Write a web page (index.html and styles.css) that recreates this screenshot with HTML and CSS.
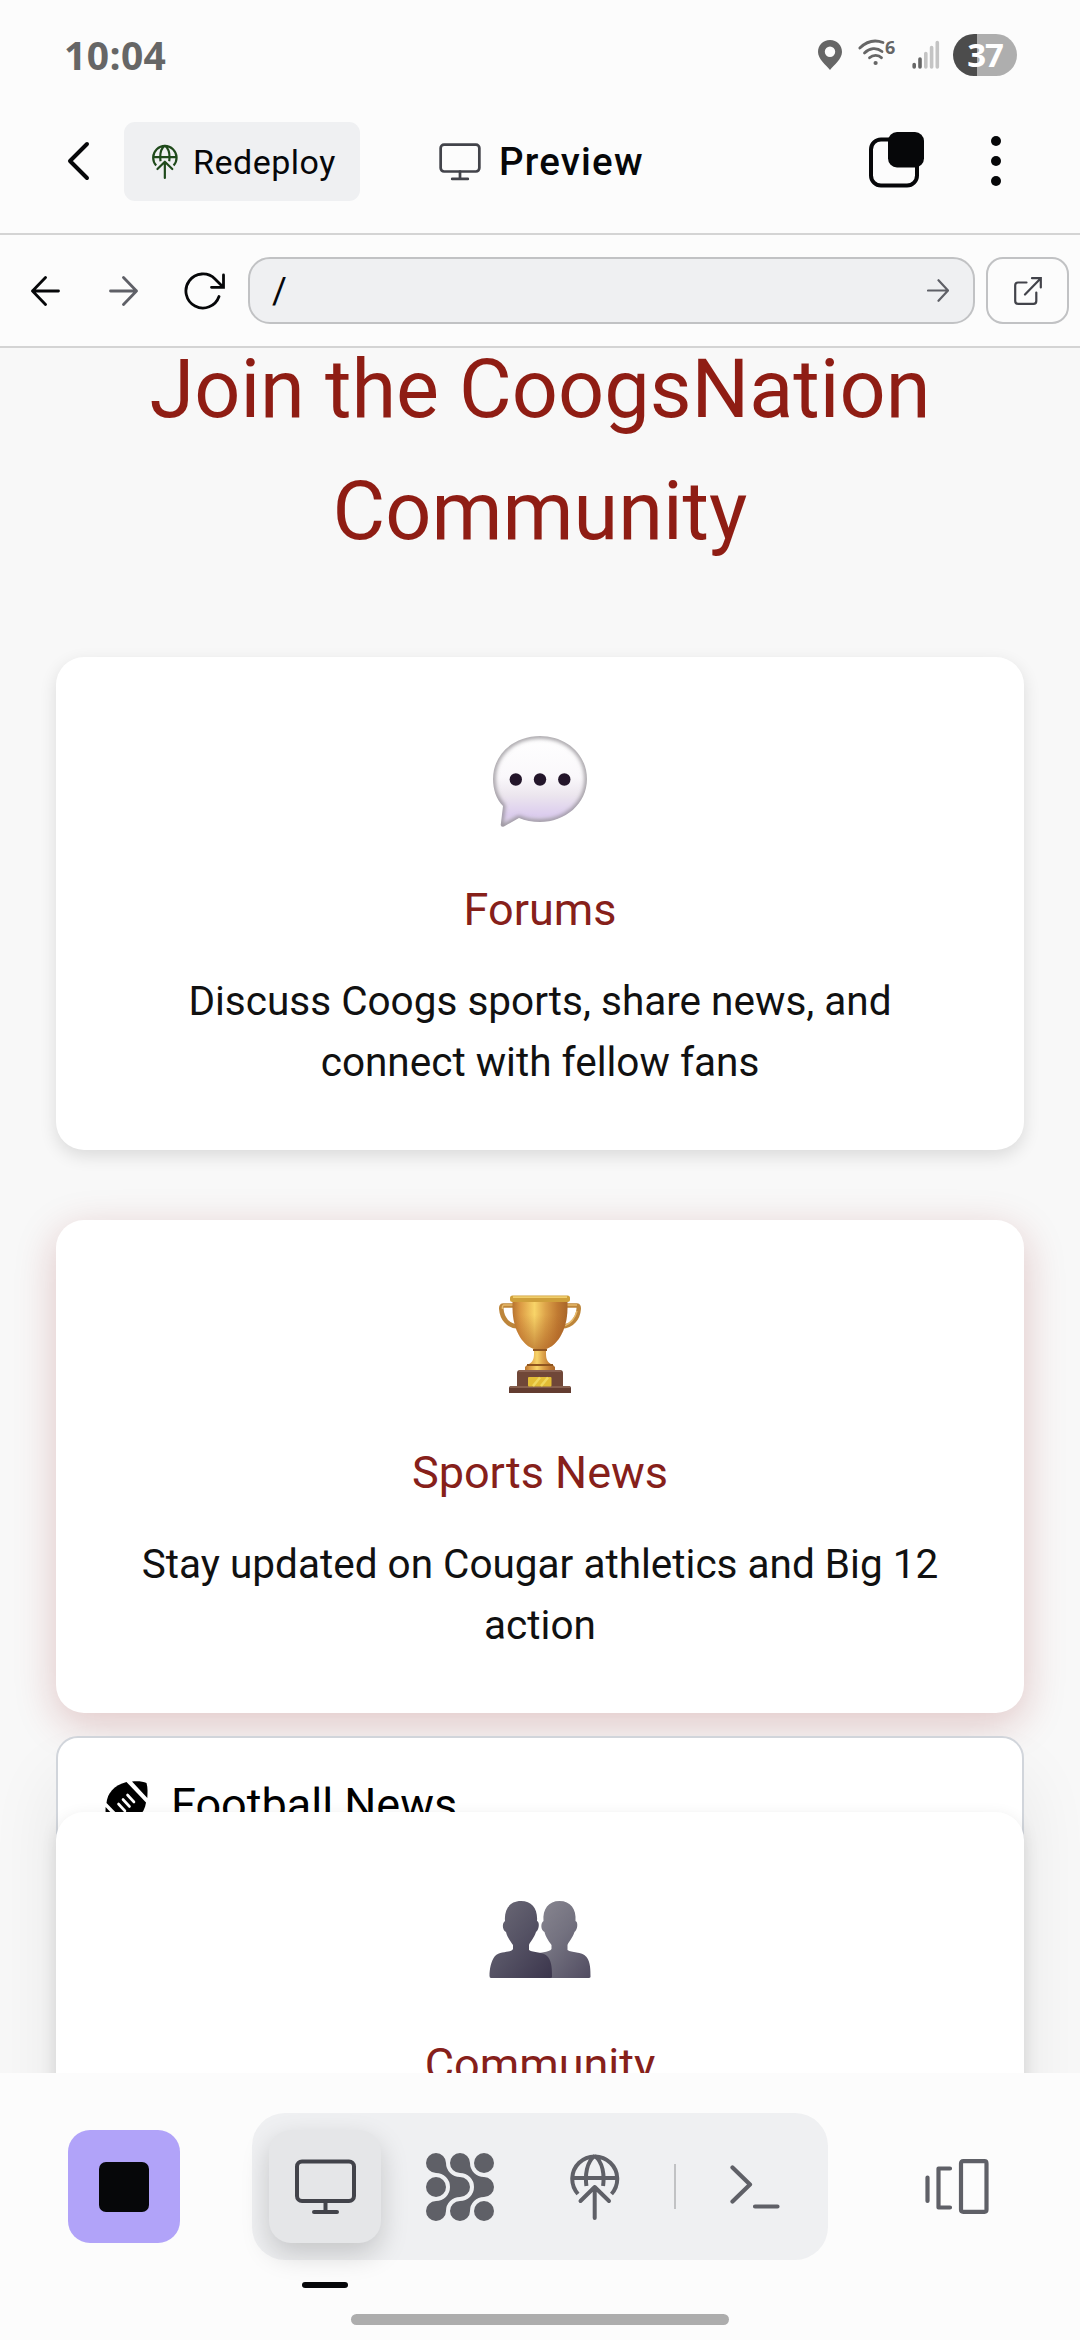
FILE: index.html
```html
<!DOCTYPE html>
<html lang="en">
<head>
<meta charset="utf-8">
<title>Preview</title>
<link rel="stylesheet" href="styles.css">
</head>
<body>
<svg class="defs" width="0" height="0">
  <symbol id="globe" viewBox="0 0 50 67" fill="none" stroke="currentColor" stroke-linecap="round" stroke-linejoin="round">
    <path stroke-linecap="butt" d="M8 41A22.5 22.5 0 1 1 41.5 41M24.7 3C16.5 9 15 22 16.400 33M24.700 3C33 9 34.500 22 33.100 33M2.500 25H47"/>
    <path d="M24.700 65V34M10.500 48L24.700 34L39 48"/>
  </symbol>
  <symbol id="monitor" viewBox="0 0 61 56" fill="none" stroke="currentColor" stroke-linecap="round" stroke-linejoin="round">
    <rect x="2" y="2.500" width="57" height="39.500" rx="5"/><path d="M30.500 42V53M19 53H42"/>
  </symbol>
</svg>
<div class="screen">
  <div class="status">
    <span class="clock">10:04</span>
    <svg class="pin" width="24" height="30" viewBox="0 0 24 30"><path fill="#666" fill-rule="evenodd" d="M12 0C5 0 0 5 0 12C0 19 8 25 12 30C16 25 24 19 24 12C24 5 19 0 12 0ZM12 6.500A5.200 5.200 0 1 1 12 16.900A5.200 5.200 0 1 1 12 6.500Z"/></svg>
    <svg class="wifi" width="38" height="28" viewBox="0 0 38 28"><g fill="none" stroke="#666" stroke-width="2.800" stroke-linecap="round"><path d="M1.800 9C8.500 2.500 17 .5 25 3.500M6.500 14C11.500 9 18.500 8 24 12.500M11.500 18.800C15 15.600 20.500 15.600 23.500 18.800"/></g><circle cx="17.600" cy="24" r="2.100" fill="#666"/><text x="27" y="14.800" class="wifi-gen">6</text></svg>
    <svg class="signal" width="28" height="30" viewBox="0 0 28 30" stroke-width="3.600" stroke-linecap="round"><path stroke="#666" d="M2.200 24.500V27M8 19V27"/><path stroke="#c4c4c4" d="M13.800 13.500V27M19.600 7.500V27M25.300 2.500V27"/></svg>
    <span class="battery">37</span>
  </div>
  <div class="header">
    <svg class="back" width="24" height="40" viewBox="0 0 24 40"><path d="M20 3L3 20L20 37" fill="none" stroke="#060709" stroke-width="4" stroke-linecap="round" stroke-linejoin="round"/></svg>
    <div class="redeploy"><svg width="26" height="35"><use href="#globe" stroke-width="4.200"/></svg><span>Redeploy</span></div>
    <div class="title"><svg width="42" height="38"><use href="#monitor" stroke-width="4"/></svg><span>Preview</span></div>
    <svg class="tabs" width="56" height="56" viewBox="0 0 56 56"><rect x="2" y="7.500" width="46" height="46" rx="10" fill="none" stroke="#060709" stroke-width="4"/><rect x="19" y="0" width="36" height="35.500" rx="9" fill="#060709"/></svg>
    <svg class="more" width="10" height="50" viewBox="0 0 10 50" fill="#060709"><circle cx="5" cy="5" r="5"/><circle cx="5" cy="25" r="5"/><circle cx="5" cy="45" r="5"/></svg>
  </div>
  <div class="toolbar">
    <svg class="nav-back" width="29" height="30" viewBox="0 0 29 30"><path d="M27.500 15H1.500M14.500 1.500L1.500 15L14.500 28.500" fill="none" stroke="#060709" stroke-width="2.800" stroke-linecap="round" stroke-linejoin="round"/></svg>
    <svg class="nav-forward" width="29" height="30" viewBox="0 0 29 30"><path d="M1.500 15H27.500M14.500 1.500L27.500 15L14.500 28.500" fill="none" stroke="#5f6067" stroke-width="2.800" stroke-linecap="round" stroke-linejoin="round"/></svg>
    <svg class="reload" width="42" height="38" viewBox="0 0 42 38"><path d="M35 24.500A17 17 0 1 1 31 7L39 15M39.500 3V15.300H27.500" fill="none" stroke="#060709" stroke-width="2.800" stroke-linecap="round"/></svg>
    <div class="address"><span>/</span><svg width="22" height="23" viewBox="0 0 22 23"><path d="M1 11.500H21M11.500 1.200L21 11.500L11.500 21.800" fill="none" stroke="#5f6067" stroke-width="2.200" stroke-linecap="round" stroke-linejoin="round"/></svg></div>
    <div class="open"><svg width="28" height="28" viewBox="0 0 28 28"><path d="M12.500 5.500H4A2.800 2.800 0 0 0 1.200 8.300V24A2.800 2.800 0 0 0 4 26.800H19.500A2.800 2.800 0 0 0 22.300 24V15.500M18 1.200H26.800V10.500M26.800 1.200L11 17.500" fill="none" stroke="#42434a" stroke-width="2.200" stroke-linecap="round"/></svg></div>
  </div>
  <div class="page">
    <h1>Join the CoogsNation<br>Community</h1>
    <section class="card">
      <svg class="emoji" width="96" height="92" viewBox="0 0 96 92">
        <defs><linearGradient id="bub" x1="0" y1="0" x2="0" y2="1"><stop offset="0" stop-color="#fff"/><stop offset=".45" stop-color="#faf8fb"/><stop offset=".65" stop-color="#ece6ee"/><stop offset=".87" stop-color="#dccdee"/><stop offset="1" stop-color="#ddd5e4"/></linearGradient><filter id="soft"><feGaussianBlur stdDeviation="2.200"/></filter>
        <clipPath id="bubclip"><path id="bubpath" d="M48 0C74 0 95 18 95 43C95 68 73 86 48 86C40 86 33 84.500 27 82L12 90.500Q8 91.500 8.800 88L11 70C4 63 1 53 1 43C1 18 22 0 48 0Z"/></clipPath></defs>
        <g clip-path="url(#bubclip)"><use href="#bubpath" fill="url(#bub)"/><use href="#bubpath" fill="none" stroke="#8e8a90" stroke-width="4" filter="url(#soft)"/></g>
        <g fill="#23152a"><circle cx="23.800" cy="43.500" r="6.200"/><circle cx="48" cy="43.500" r="6.200"/><circle cx="72.300" cy="43.500" r="6.200"/></g>
      </svg>
      <h3>Forums</h3>
      <p>Discuss Coogs sports, share news, and<br>connect with fellow fans</p>
    </section>
    <section class="card hovered">
      <svg class="emoji" width="82" height="99" viewBox="0 0 82 99">
        <defs><linearGradient id="cup"><stop offset="0" stop-color="#b8742f"/><stop offset=".15" stop-color="#dc9b45"/><stop offset=".4" stop-color="#f8d468"/><stop offset=".6" stop-color="#dda34a"/><stop offset=".82" stop-color="#c07a32"/><stop offset="1" stop-color="#a8662a"/></linearGradient>
        <linearGradient id="shade" x1="0" y1="0" x2="0" y2="1"><stop offset=".3" stop-color="#a85a20" stop-opacity="0"/><stop offset="1" stop-color="#a85a20" stop-opacity=".6"/></linearGradient></defs>
        <path d="M15 11.500H4Q2 11.500 2.300 15C3 24 9 32.500 19 32.500M67 11.500H78Q80 11.500 79.700 15C79 24 73 32.500 63 32.500" fill="none" stroke="#bd853a" stroke-width="4.500"/>
        <path d="M14 11H4.500Q3 12 3.500 15M68 11H78M78 17C76 24 72 29 66 31.500" fill="none" stroke="#e6b96b" stroke-width="1.500"/>
        <path d="M35 52H47V60C47 66 49 69 54 71L56 73V78H26V73L28 71C33 69 35 66 35 60Z" fill="url(#cup)"/>
        <path d="M13.500 6H68.500V15C68 38 57 52 47 55H35C25 52 14 38 13.500 15Z" fill="url(#cup)"/>
        <path d="M13.500 6H68.500V15C68 38 57 52 47 55H35C25 52 14 38 13.500 15Z" fill="url(#shade)"/>
        <rect x="11" y="1.500" width="60" height="6.500" rx="2.500" fill="#cfa03b"/><path d="M14 3.200H68" stroke="#f0ce6c" stroke-width="1.800"/>
        <path d="M34 56H48M28 71H54" stroke="#8f551f" stroke-width="2"/>
        <path d="M18 95V79Q18 76 21 76H61Q64 76 64 79V95Z" fill="#704738"/><path d="M20 77H62" stroke="#8a6252" stroke-width="2"/>
        <path d="M10 99V94Q10 92 12 92H70Q72 92 72 94V99Z" fill="#633c30"/><path d="M11 93H71" stroke="#87604f" stroke-width="2"/>
        <rect x="29" y="83" width="23.500" height="9.500" rx="1" fill="#e2bd35"/><path d="M34 92L41 83.500M42 92L49 83.500" stroke="#f0d75c" stroke-width="2.500"/>
      </svg>
      <h3>Sports News</h3>
      <p>Stay updated on Cougar athletics and Big 12<br>action</p>
      <div class="submenu">
        <svg width="43" height="43" viewBox="0 0 43 43"><path d="M21.500 1C9 4 2 13 1.500 22L20 41C31 40 39.500 33 41 21.500Z"/><path d="M27 .6C33 0 38 .6 41.500 2C43 7 42.500 12 42.300 17ZM.6 26L16 42.500H3Q0 35 .6 26Z"/><path d="M13.500 23L20 30M18 18.500L24.500 25.500M22.500 14L29 21" stroke="#fff" stroke-width="2.600" stroke-linecap="round"/></svg>
        <span>Football News</span>
      </div>
    </section>
    <section class="card last">
      <svg class="emoji" width="102" height="77" viewBox="0 0 102 77">
        <defs><linearGradient id="pa" x1="0" y1="0" x2="1" y2="1"><stop offset="0" stop-color="#6e6c78"/><stop offset=".5" stop-color="#555264"/><stop offset="1" stop-color="#3b354c"/></linearGradient><linearGradient id="pb" x1="0" y1="0" x2="1" y2="1"><stop offset="0" stop-color="#8d8b94"/><stop offset=".5" stop-color="#73717f"/><stop offset="1" stop-color="#514c61"/></linearGradient></defs>
        <path transform="translate(38.500)" d="M32 0C43 0 49 8 48 20C51 21 50 29 47 31C45 37 41 41 40 44V49C44 52 54 50 59 56C63 61 63 69 63 76Q63 77 61 77H2Q.5 77 .5 75C.5 68 2 60 6 55C11 50 22 52 24 48V44C22 41 18 36 17 31C13 29 13 22 16 20C15 8 21 0 32 0Z" fill="url(#pb)"/>
        <path d="M32 0C43 0 49 8 48 20C51 21 50 29 47 31C45 37 41 41 40 44V49C44 52 54 50 59 56C63 61 63 69 63 76Q63 77 61 77H2Q.5 77 .5 75C.5 68 2 60 6 55C11 50 22 52 24 48V44C22 41 18 36 17 31C13 29 13 22 16 20C15 8 21 0 32 0Z" fill="url(#pa)"/>
      </svg>
      <h3>Community</h3>
    </section>
  </div>
  <div class="dock">
    <div class="stop"><i></i></div>
    <div class="tools">
      <div class="tool active"><svg width="61" height="56"><use href="#monitor" stroke-width="4"/></svg></div>
      <svg class="dots" width="68" height="68" viewBox="-10 -10 68 68" fill="#5f6067"><path d="M10 0A14 14 0 0 0 24 14A10 10 0 0 1 24 34A14 14 0 0 0 10 48A10 10 0 1 1 0 38A14 14 0 0 0 0 10A10 10 0 1 1 10 0ZM34 0A14 14 0 0 0 48 14A10 10 0 0 1 48 34A14 14 0 0 0 34 48A10 10 0 1 1 24 38A14 14 0 0 0 24 10A10 10 0 1 1 34 0Z"/><circle cx="48" cy="0" r="10"/><circle cx="0" cy="24" r="10"/><circle cx="48" cy="48" r="10"/></svg>
      <svg class="publish" width="50" height="67"><use href="#globe" stroke-width="4"/></svg>
      <span class="divider"></span>
      <svg class="shell" width="50" height="44" viewBox="0 0 50 44"><path d="M2.500 2.500L20 19.500L2.500 36.500M25 41.500H47.500" fill="none" stroke="#5f6067" stroke-width="4.200" stroke-linecap="round" stroke-linejoin="round"/></svg>
    </div>
    <svg class="panes" width="64" height="55" viewBox="0 0 64 55"><path d="M2.500 18.500V42M25 9.500H13.500V48.500H25M36 4.500Q36 2.200 38.300 2.200H59.500Q61.500 2.200 61.500 4.500V50.500Q61.500 52.800 59.500 52.800H38.300Q36 52.800 36 50.500Z" fill="none" stroke="#5f6067" stroke-width="4.200" stroke-linecap="round" stroke-linejoin="round"/></svg>
  </div>
  <div class="indicator"></div>
  <div class="home-bar"></div>
</div>
</body>
</html>
```
FILE: styles.css
```css
* { box-sizing: border-box; }
body { margin: 0; font-family: Roboto, sans-serif; background: #fcfcfc; color: #060709; }
svg { display: block; flex: none; }
.defs { position: absolute; }
.screen { width: 1080px; height: 2340px; overflow: hidden; display: flex; flex-direction: column; background: #fcfcfc; }

.status { height: 110px; flex: none; display: flex; align-items: center; padding: 0 63px 0 64px; }
.clock { font: 700 39px/54px "Open Sans", sans-serif; letter-spacing: .4px; color: #666; margin-right: auto; }
.wifi { margin: 0 16px 5px; overflow: visible; }
.wifi-gen { font: 700 18px "Open Sans", sans-serif; fill: #666; }
.signal { margin-right: 13px; }
.battery { width: 64px; height: 42px; border-radius: 21px; background: linear-gradient(90deg, #4c4c4c 24px, #aeaeae 24px); color: #fff; font: 700 33px/42px "Open Sans", sans-serif; text-align: center; letter-spacing: -1px; }

.header { height: 125px; flex: none; display: flex; align-items: flex-start; padding: 12px 79px 0 67px; border-bottom: 2px solid #d4d4d4; }
.back { margin-top: 19px; }
.redeploy { width: 236px; height: 79px; margin-left: 33px; border-radius: 11px; background: #eff0f2; display: flex; align-items: center; padding-left: 28px; gap: 15px; font-size: 34px; letter-spacing: .5px; }
.redeploy svg { color: #1f4a1b; }
.title { height: 79px; margin-left: 79px; display: flex; align-items: center; gap: 18px; font-size: 38.5px; font-weight: 500; letter-spacing: 1.2px; margin-right: auto; }
.title svg { color: #42434a; }
.tabs { margin-top: 10px; }
.more { margin: 14px 0 0 66px; }

.toolbar { height: 113px; flex: none; display: flex; align-items: center; padding: 0 11px 0 31px; border-bottom: 2px solid #d4d4d4; }
.nav-forward { margin-left: 49px; }
.reload { margin: 0 22px 0 46px; }
.address { width: 727px; height: 67px; border: 2px solid #c1c2c4; border-radius: 22px; background: #eff0f2; display: flex; align-items: center; justify-content: space-between; padding: 0 24px 0 22px; font-size: 36px; }
.open { width: 83px; height: 67px; margin-left: 11px; border: 2px solid #c1c2c4; border-radius: 17px; display: grid; place-items: center; }

.page { height: 1725px; flex: none; overflow: hidden; background: #f8f8f8; text-align: center; padding: 0 56px; }
h1, h3, p { margin: 0; font-weight: 400; }
h1 { margin: -19px 0 85px; font-size: 81px; line-height: 121.5px; color: #8f1d14; }
.card { position: relative; height: 493px; border-radius: 28px; background: #fff; padding-top: 56px; margin-bottom: 70px; box-shadow: 0 6px 17px rgba(0, 0, 0, .12); display: flex; flex-direction: column; align-items: center; }
.card.hovered { box-shadow: 0 11px 42px rgba(139, 20, 20, .22); margin-bottom: 99px; }
.card h3 { font-size: 45px; line-height: 67px; color: #86201a; margin: auto 0 28px; }
.card p { font-size: 40.5px; line-height: 61px; color: #111; margin-bottom: 57px; }
.emoji { margin-top: 23px; }
.hovered .emoji { margin-top: 18px; }
.last .emoji { margin-top: 33px; }
.last h3 { margin: 53px 0 0; }
.submenu { position: absolute; left: 0; right: 0; top: 516px; height: 420px; border: 2px solid #d1d5db; border-radius: 22px; background: #fff; padding: 43px 47px; display: flex; align-items: flex-start; gap: 23px; font-size: 45px; line-height: 47px; color: #000; box-shadow: 0 42px 70px rgba(0, 0, 0, .08); }

.dock { height: 187px; flex: none; display: flex; align-items: center; padding: 40px 91px 0 68px; }
.stop { width: 112px; height: 113px; border-radius: 22px; background: #b1a3f9; display: grid; place-items: center; }
.stop i { width: 50px; height: 50px; border-radius: 7px; background: #060709; }
.tools { width: 576px; height: 147px; margin-left: 72px; border-radius: 33px; background: #eff0f2; display: flex; align-items: center; padding-left: 17px; color: #5f6067; }
.active { width: 112px; height: 113px; border-radius: 22px; background: #e5e6e8; color: #42434a; display: grid; place-items: center; box-shadow: 0 11px 28px rgba(0, 0, 0, .18); }
.dots { margin-left: 45px; }
.publish { margin-left: 76px; }
.divider { width: 2px; height: 45px; margin-left: 54px; background: #c1c2c4; }
.shell { margin-left: 54px; }
.panes { margin-left: auto; }
.indicator { width: 46px; height: 6px; flex: none; border-radius: 3px; background: #060709; margin: 22px 0 26px 302px; }
.home-bar { width: 378px; height: 11px; flex: none; border-radius: 6px; background: #adadad; margin-left: 351px; }
```
